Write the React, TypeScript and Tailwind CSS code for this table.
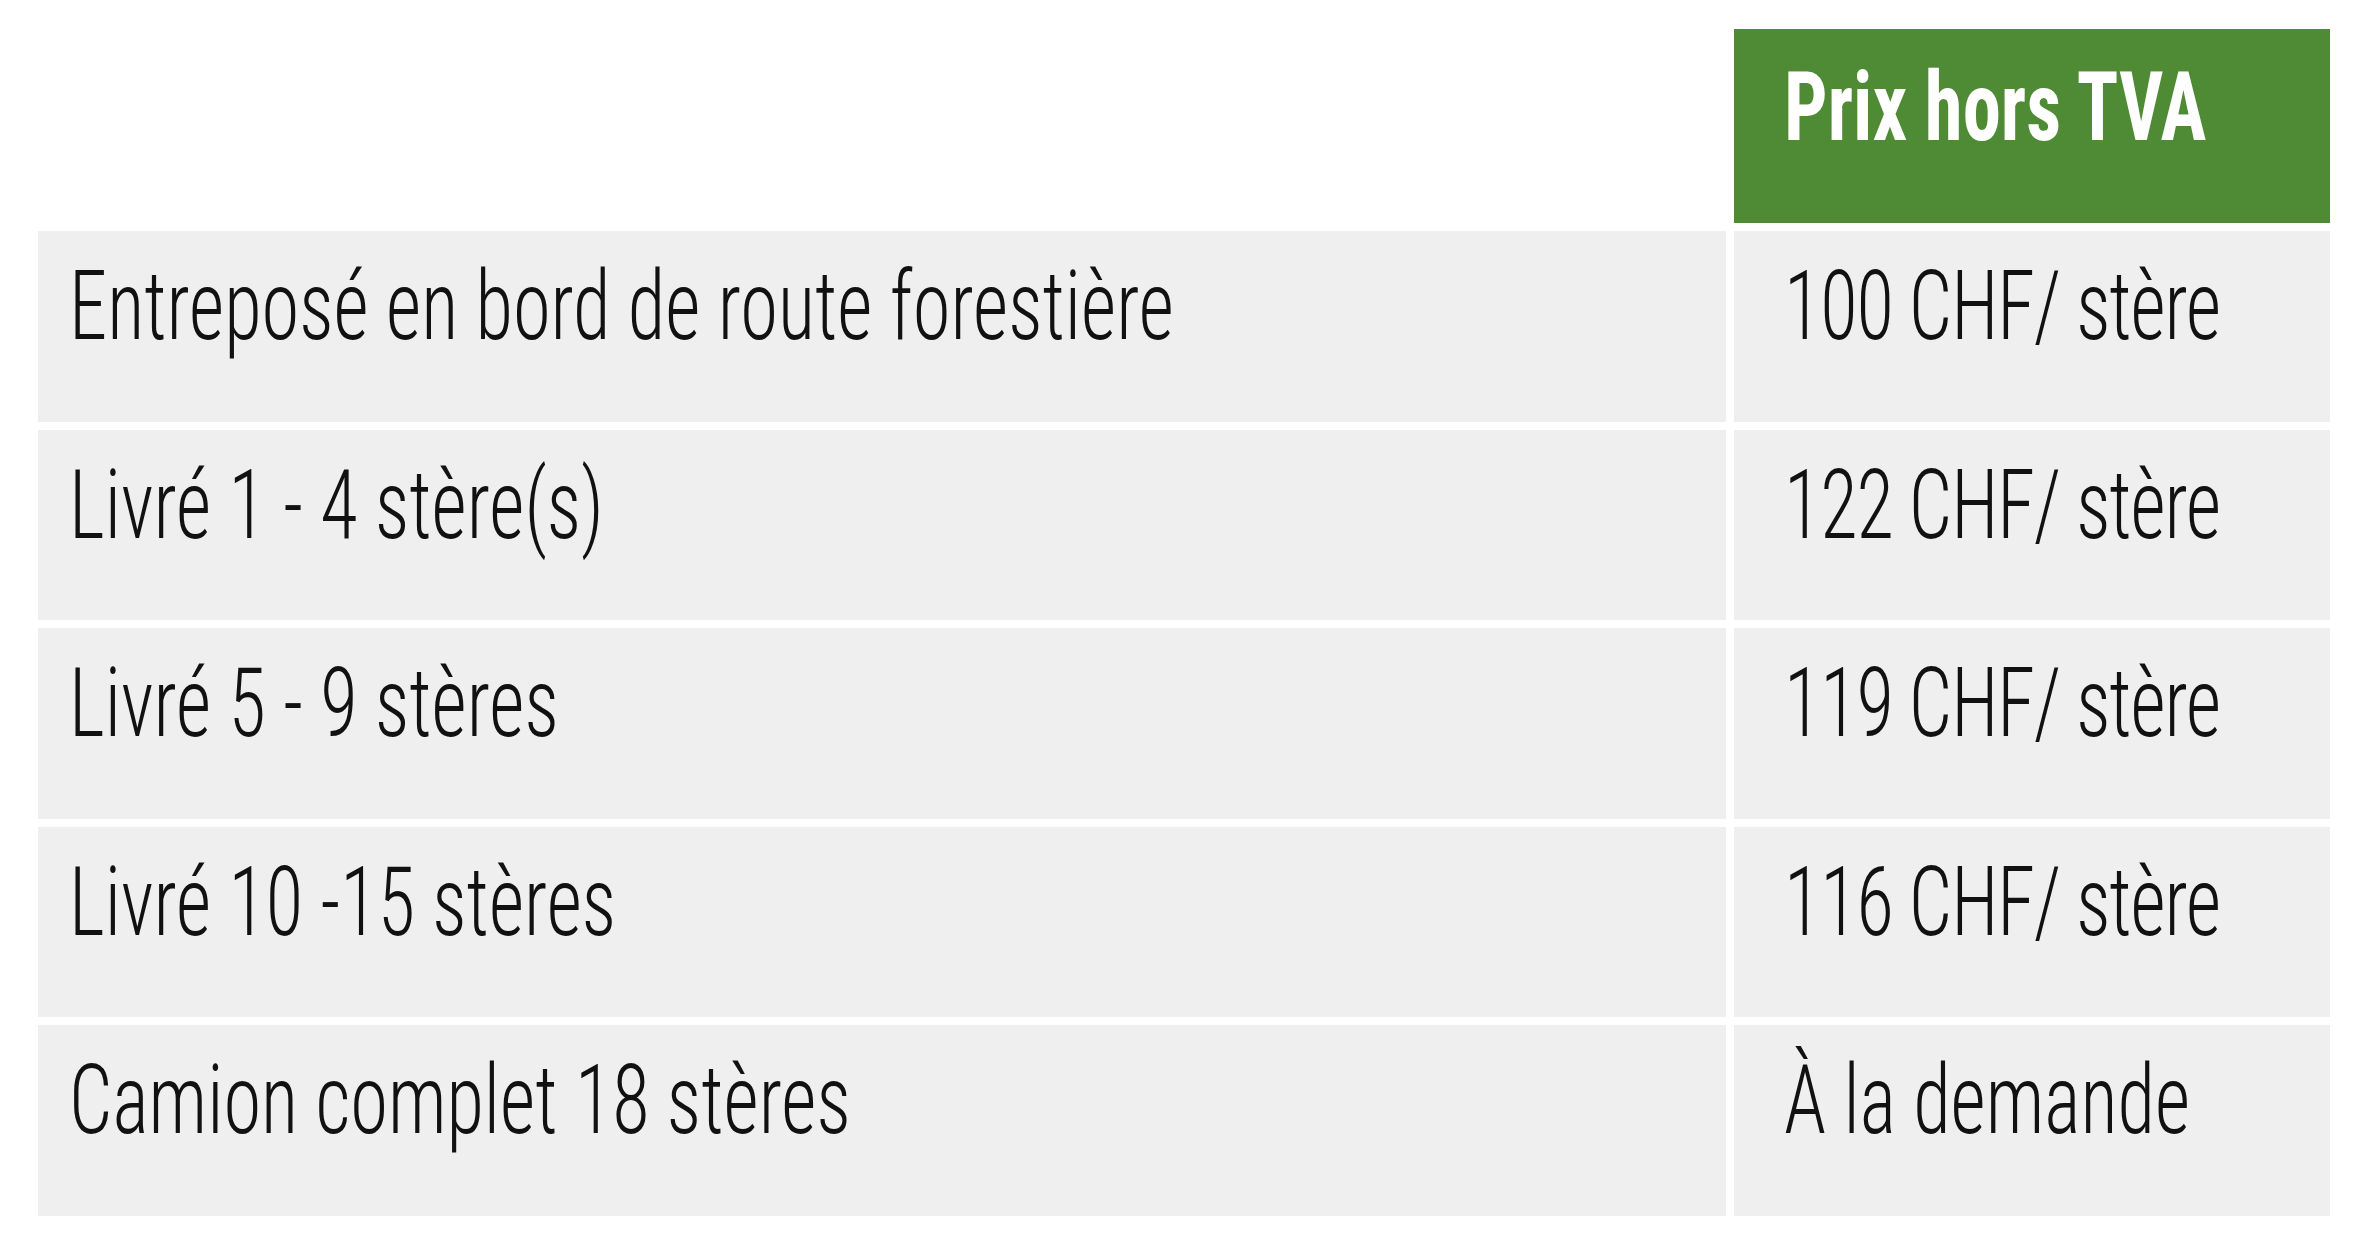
const rows = [
  { label: "Entreposé en bord de route forestière", price: "100 CHF/ stère" },
  { label: "Livré 1 - 4 stère(s)", price: "122 CHF/ stère" },
  { label: "Livré 5 - 9 stères", price: "119 CHF/ stère" },
  { label: "Livré 10 -15 stères", price: "116 CHF/ stère" },
  { label: "Camion complet 18 stères", price: "À la demande" },
]

function Text({ children, bold, tight }: { children: React.ReactNode; bold?: boolean; tight?: boolean }) {
  return (
    <span
      className={`block origin-left scale-x-[0.8] whitespace-nowrap text-[96px] leading-none ${
        bold ? "font-bold text-white" : "font-light text-[#111]"
      } ${tight ? "tracking-[-1.4px]" : ""}`}
    >
      {children}
    </span>
  )
}

export default function App() {
  return (
    <div className="min-h-screen bg-white pl-[38px] pr-[32px] pt-[29px] font-['Roboto_Condensed',_'Liberation_Sans_Narrow',_sans-serif]">
      <div className="grid grid-cols-[1688px_596px] gap-x-[8px]">
        {/* header */}
        <div />
        <div className="h-[194px] bg-[#4f8a35] pl-[50px] pt-[30px]">
          <Text bold>Prix hors TVA</Text>
        </div>
      </div>

      <div className="mt-[8px] flex flex-col gap-[8px]">
        {rows.map((r) => (
          <div key={r.label} className="grid grid-cols-[1688px_596px] gap-x-[8px]">
            <div className="h-[190.5px] bg-[#efefef] pl-[31px] pt-[27px]">
              <Text>{r.label}</Text>
            </div>
            <div className="h-[190.5px] bg-[#efefef] pl-[50px] pt-[27px]">
              <Text tight={/\d/.test(r.price)}>{r.price}</Text>
            </div>
          </div>
        ))}
      </div>
    </div>
  )
}
